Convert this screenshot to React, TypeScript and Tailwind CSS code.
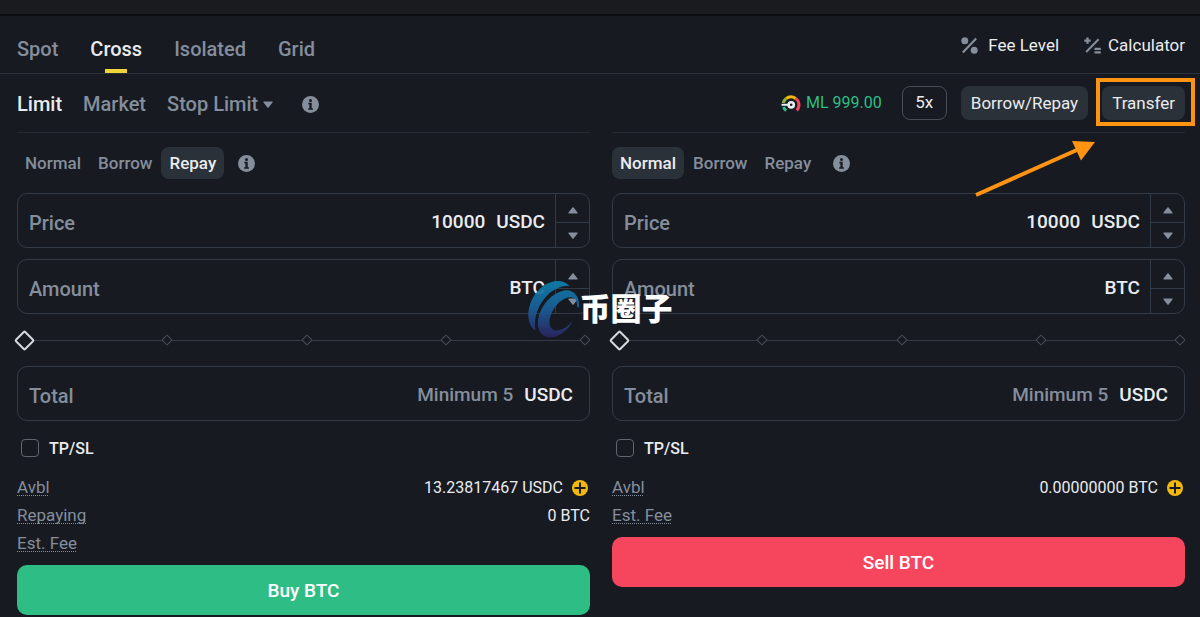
import { useState } from "react";

type Side = "buy" | "sell";

type InfoRow = {
  label: string;
  value?: string;
  canAdd?: boolean;
};

type PanelConfig = {
  side: Side;
  initialMode: string;
  rows: InfoRow[];
  submitLabel: string;
};

const marginTabs = ["Spot", "Cross", "Isolated", "Grid"];
const modes = ["Normal", "Borrow", "Repay"];
const sliderStops = [0, 25, 50, 75, 100];

const panels: PanelConfig[] = [
  {
    side: "buy",
    initialMode: "Repay",
    rows: [
      { label: "Avbl", value: "13.23817467 USDC", canAdd: true },
      { label: "Repaying", value: "0 BTC" },
      { label: "Est. Fee" },
    ],
    submitLabel: "Buy BTC",
  },
  {
    side: "sell",
    initialMode: "Normal",
    rows: [
      { label: "Avbl", value: "0.00000000 BTC", canAdd: true },
      { label: "Est. Fee" },
    ],
    submitLabel: "Sell BTC",
  },
];

function InfoIcon() {
  return (
    <svg className="h-[17px] w-[17px]" viewBox="0 0 17 17" aria-hidden="true">
      <circle cx="8.5" cy="8.5" r="8.5" fill="#848e9c" />
      <circle cx="8.5" cy="4.4" r="1.5" fill="#171a21" />
      <path d="M6.4 6.8h3.3v5.4h1.2v1.6H6.2v-1.6h1.2V8.400h-1z" fill="#171a21" />
    </svg>
  );
}

function FeeIcon() {
  return (
    <svg className="h-[17px] w-[17px]" viewBox="0 0 17 17" aria-hidden="true">
      <circle cx="3.8" cy="3.8" r="3.5" fill="#848e9c" />
      <circle cx="13.2" cy="13.2" r="3.5" fill="#848e9c" />
      <path d="M15.2 1.4 1.800 15.400" stroke="#848e9c" strokeWidth="2.2" />
    </svg>
  );
}

function CalculatorIcon() {
  return (
    <svg className="h-[17px] w-[17px]" viewBox="0 0 17 17" aria-hidden="true">
      <g stroke="#848e9c" fill="none">
        <path d="M14.600 2.200 2.200 15" strokeWidth="2" />
        <path d="M.3 3.600h6.400M3.500.4v6.400" strokeWidth="2.4" />
        <path d="M10.500 11.800h6.300M10.500 15.400h6.300" strokeWidth="2.2" />
      </g>
    </svg>
  );
}

function MarginGauge() {
  return (
    <svg className="h-[17px] w-5" viewBox="0 0 20 17" fill="none" aria-hidden="true">
      <path d="M2.200 8A8 8 0 0 1 5 3.700" stroke="#8fb83c" strokeWidth="3" />
      <path d="M5 3.700A8 8 0 0 1 14.600 3.400" stroke="#f0b90b" strokeWidth="3" />
      <path d="M14.600 3.400a8 8 0 0 1 1.200 12" stroke="#f6465d" strokeWidth="3" />
      <path d="M5.200 15.600A8 8 0 0 1 2.500 12" stroke="#2ebd85" strokeWidth="3" />
      <path d="M.5 9.800h7" stroke="#eaecef" strokeWidth="2" />
      <circle cx="10.200" cy="9.800" r="2.600" stroke="#eaecef" strokeWidth="2.600" />
    </svg>
  );
}

function AddIcon() {
  return (
    <svg className="h-4 w-4" viewBox="0 0 16 16" aria-hidden="true">
      <circle cx="8" cy="8" r="8" fill="#f0b90b" />
      <path d="M8 2.500v11M2.500 8h11" stroke="#171a21" strokeWidth="2" />
    </svg>
  );
}

function Triangle({ down = false }: { down?: boolean }) {
  return (
    <svg className="h-[7px] w-[10px]" viewBox="0 0 10 7" aria-hidden="true">
      <path
        d={
          down
            ? "M.8.5h8.4q.8.2.3 1L5.6 6.5q-.6.7-1.2 0L.5 1.5Q0 .7.8.5z"
            : "M.8 6.5h8.4q.8-.2.3-1L5.6.5q-.6-.7-1.2 0L.5 5.5Q0 6.3.8 6.5z"
        }
        fill="#848e9c"
      />
    </svg>
  );
}

type FieldProps = {
  id: string;
  label: string;
  unit: string;
  defaultValue?: string;
  placeholder?: string;
  stepper?: boolean;
};

function Field({ id, label, unit, defaultValue, placeholder, stepper }: FieldProps) {
  return (
    <div className="flex h-[55px] overflow-hidden rounded-[10px] border border-[#333b47]">
      <div
        className={`flex min-w-0 flex-1 items-center gap-[11px] pt-1 pl-[11px] text-[19px] font-medium ${
          stepper ? "pr-[10px]" : "pr-4"
        }`}
      >
        <label htmlFor={id} className="text-[20px] text-[#848e9c]">
          {label}
        </label>
        <input
          id={id}
          type="text"
          inputMode="decimal"
          defaultValue={defaultValue}
          placeholder={placeholder}
          className="min-w-0 flex-1 bg-transparent text-right text-[#eaecef] outline-none placeholder:text-[#848e9c]"
        />
        <span className="text-[#eaecef]">{unit}</span>
      </div>
      {stepper && (
        <div className="flex w-[34px] flex-col border-l border-[#333b47]">
          <button
            type="button"
            aria-label={`Increase ${label}`}
            className="flex flex-1 items-center justify-center border-b border-[#333b47] pt-1"
          >
            <Triangle />
          </button>
          <button
            type="button"
            aria-label={`Decrease ${label}`}
            className="flex flex-1 items-center justify-center"
          >
            <Triangle down />
          </button>
        </div>
      )}
    </div>
  );
}

function AmountSlider({ side }: { side: Side }) {
  const [percent, setPercent] = useState(0);

  return (
    <div className="relative flex h-5 items-center">
      <div className="absolute right-1 left-[7px] h-px bg-[#333b47]" />
      <div className="absolute right-px left-[7px] flex justify-between">
        {sliderStops.map((stop) => (
          <span
            key={stop}
            className="h-2 w-2 rotate-45 rounded-[1px] border border-[#474d57] bg-[#171a21]"
          />
        ))}
      </div>
      <input
        type="range"
        aria-label={`${side} amount percent`}
        min={0}
        max={100}
        value={percent}
        onChange={(event) => setPercent(Number(event.target.value))}
        className="relative h-5 w-full appearance-none bg-transparent [&::-webkit-slider-thumb]:h-[15px] [&::-webkit-slider-thumb]:w-[15px] [&::-webkit-slider-thumb]:rotate-45 [&::-webkit-slider-thumb]:appearance-none [&::-webkit-slider-thumb]:rounded-[2px] [&::-webkit-slider-thumb]:border-2 [&::-webkit-slider-thumb]:border-[#d5d8dc] [&::-webkit-slider-thumb]:bg-[#171a21]"
      />
    </div>
  );
}

function OrderPanel({ side, initialMode, rows, submitLabel }: PanelConfig) {
  const [mode, setMode] = useState(initialMode);

  return (
    <form className="flex flex-col" onSubmit={(event) => event.preventDefault()}>
      <div className="flex items-center gap-px text-[17px] font-medium">
        {modes.map((item) => (
          <button
            key={item}
            type="button"
            onClick={() => setMode(item)}
            className={`h-8 rounded-lg px-2 pt-[2px] ${
              item === mode ? "bg-[#2b3139] text-[#eaecef]" : "text-[#848e9c]"
            }`}
          >
            {item}
          </button>
        ))}
        <button type="button" aria-label="Mode info" className="ml-[13px]">
          <InfoIcon />
        </button>
      </div>

      <div className="mt-[14px] grid gap-[11px]">
        <Field id={`${side}-price`} label="Price" unit="USDC" defaultValue="10000" stepper />
        <Field id={`${side}-amount`} label="Amount" unit="BTC" stepper />
      </div>

      <div className="my-4">
        <AmountSlider side={side} />
      </div>

      <Field id={`${side}-total`} label="Total" unit="USDC" placeholder="Minimum 5" />

      <label className="mt-[15px] flex h-6 items-center gap-[10px] pl-1 text-[16px] font-medium text-[#eaecef]">
        <input
          type="checkbox"
          className="h-[18px] w-[18px] appearance-none rounded-[4px] border border-[#5e6673] checked:bg-[#f0b90b]"
        />
        <span className="pt-[2px]">TP/SL</span>
      </label>

      <div className="mt-[14px] text-[16px]">
        {rows.map((row) => (
          <div key={row.label} className="flex h-7 items-center justify-between">
            <span className="text-[17px] text-[#848e9c] underline decoration-dotted decoration-1 underline-offset-2 [text-decoration-skip-ink:none]">
              {row.label}
            </span>
            {row.value && (
              <span className="flex items-center gap-[9px] text-[#eaecef]">
                {row.value}
                {row.canAdd && (
                  <button type="button" aria-label="Add funds" className="mr-[2px]">
                    <AddIcon />
                  </button>
                )}
              </span>
            )}
          </div>
        ))}
      </div>

      <button
        type="submit"
        className={`mt-[7px] h-[50px] rounded-[10px] pt-[2px] text-[19px] font-medium text-white ${
          side === "buy" ? "bg-[#2ebd85]" : "bg-[#f6465d]"
        }`}
      >
        {submitLabel}
      </button>
    </form>
  );
}

// Orange frame and arrow that point out the Transfer button
function TransferCallout() {
  return (
    <div className="pointer-events-none absolute -top-2 -right-[10px] -bottom-[6px] -left-[6px] border-4 border-[#ff9412]">
      <svg
        className="absolute top-14 -left-[126px] h-16 w-[126px]"
        viewBox="0 0 126 64"
        aria-hidden="true"
      >
        <path d="M2 57 104 11.500" stroke="#ff9412" strokeWidth="4" />
        <path d="M121 4 107 22.500 98 3z" fill="#ff9412" />
      </svg>
    </div>
  );
}

function Watermark() {
  return (
    <div className="pointer-events-none absolute top-1/2 left-1/2 flex -translate-x-1/2 -translate-y-1/2 items-center">
      <svg className="h-[57px] w-[52px]" viewBox="0 0 156 172" aria-hidden="true">
        <defs>
          <linearGradient id="swoosh" gradientUnits="userSpaceOnUse" x1="0" y1="0" x2="0" y2="172">
            <stop offset="0" stopColor="#0d83b0" />
            <stop offset="0.5" stopColor="#1c5f9a" />
            <stop offset="1" stopColor="#2c2464" />
          </linearGradient>
        </defs>
        <g fill="url(#swoosh)" opacity="0.92">
          <path d="M126 16C108-4 74-4 45 18 12 43-4 88 4 122c4 14 11 24 20 29C17 114 30 76 58 46 78 26 100 16 126 16z" />
          <path d="M154 84C160 52 140 24 110 30 66 39 30 88 31 132c1 28 19 42 43 39 24-3 48-21 62-49-18 21-42 33-57 27-18-7-16-37-2-60 14-24 40-43 58-37 11 3 15 14 14 26z" />
        </g>
      </svg>
      <span className="-mt-1 font-['Noto_Sans_CJK_SC',sans-serif] text-[31px] leading-[44px] font-black text-white">
        币圈子
      </span>
    </div>
  );
}

export default function App() {
  const [activeTab, setActiveTab] = useState("Cross");

  return (
    <main className="relative min-h-screen bg-[#171a21] font-['Roboto',sans-serif] text-[#eaecef]">
      <div className="h-4 border-b-2 border-[#0b0e11] bg-[#1a1b1e]" />

      <header className="flex h-[58px] justify-between border-b border-[#2b3139] pr-[15px] pl-[17px]">
        <nav className="flex gap-8 text-[20px] font-medium">
          {marginTabs.map((tab) => (
            <button
              key={tab}
              type="button"
              onClick={() => setActiveTab(tab)}
              className={`relative pt-2 ${
                tab === activeTab ? "text-[#eaecef]" : "text-[#848e9c]"
              }`}
            >
              {tab}
              {tab === activeTab && (
                <span className="absolute bottom-0 left-1/2 h-1 w-[22px] -translate-x-1/2 bg-[#f0d43a]" />
              )}
            </button>
          ))}
        </nav>
        <div className="flex items-center gap-[25px] pt-[2px] text-[17px]">
          <a href="#fee" className="flex items-center gap-[10px]">
            <FeeIcon />
            Fee Level
          </a>
          <a href="#calculator" className="flex items-center gap-[7px]">
            <CalculatorIcon />
            Calculator
          </a>
        </div>
      </header>

      <div className="grid grid-cols-2 gap-x-[22px] pr-[15px] pl-[17px]">
        <div className="flex h-[59px] items-center gap-[21px] border-b border-[#262b33] pt-[2px] text-[20px] font-medium text-[#848e9c]">
          <button type="button" className="text-[#eaecef]">
            Limit
          </button>
          <button type="button">Market</button>
          <button type="button" className="flex items-center gap-[5px]">
            Stop Limit
            <Triangle down />
          </button>
          <button type="button" aria-label="Order type info" className="ml-2">
            <InfoIcon />
          </button>
        </div>
        <div className="flex h-[59px] items-center justify-end gap-[14px] border-b border-[#262b33] text-[17px]">
          <span className="mr-[6px] flex items-center gap-[5px] text-[16px] text-[#2ebd85]">
            <MarginGauge />
            ML 999.00
          </span>
          <button type="button" className="h-[34px] w-[45px] rounded-lg border border-[#474d57]">
            5x
          </button>
          <button type="button" className="h-[34px] rounded-lg bg-[#2b3139] px-[10px] pt-[2px]">
            Borrow/Repay
          </button>
          <div className="relative">
            <button type="button" className="h-[34px] rounded-lg bg-[#2b3139] px-[10px] pt-[2px]">
              Transfer
            </button>
            <TransferCallout />
          </div>
        </div>
      </div>

      <div className="grid grid-cols-2 items-start gap-x-[22px] pt-[14px] pr-[15px] pb-[2px] pl-[17px]">
        {panels.map((panel) => (
          <OrderPanel key={panel.side} {...panel} />
        ))}
      </div>

      <Watermark />
    </main>
  );
}
